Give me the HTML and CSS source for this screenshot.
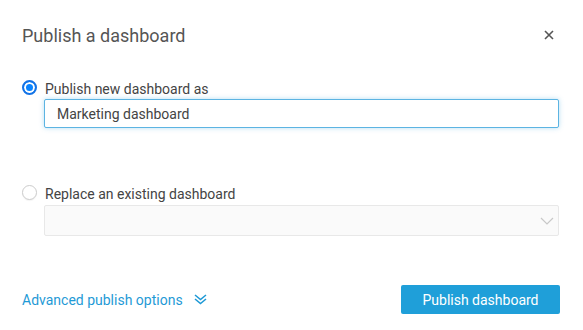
FILE: index.html
```html
<!DOCTYPE html>
<html lang="en">
<head>
    <meta charset="UTF-8">
    <meta name="viewport" content="width=device-width, initial-scale=1.0">
    <title>Publish a dashboard</title>
    <link rel="stylesheet" href="styles.css">
</head>
<body>
    <div class="dialog">
        <div class="dialog-header">
            <h1>Publish a dashboard</h1>
            <button class="close" aria-label="Close">
                <svg width="10" height="10" viewBox="0 0 10 10"><path d="M1 1L9 9M9 1L1 9" stroke="#555" stroke-width="1.6"/></svg>
            </button>
        </div>

        <div class="option">
            <label class="radio-row">
                <span class="radio checked"></span>
                <span>Publish new dashboard as</span>
            </label>
            <input type="text" class="text-input" value="Marketing dashboard">
        </div>

        <div class="option replace">
            <label class="radio-row">
                <span class="radio"></span>
                <span>Replace an existing dashboard</span>
            </label>
            <div class="select">
                <svg width="14" height="8" viewBox="0 0 14 8"><path d="M1 1L7 7L13 1" fill="none" stroke="#c8c8c8" stroke-width="1.2"/></svg>
            </div>
        </div>

        <div class="dialog-footer">
            <a href="#" class="advanced">Advanced publish options
                <svg width="13" height="11" viewBox="0 0 13 11"><path d="M1 1L6.5 5.5L12 1M1 5L6.5 9.5L12 5" fill="none" stroke="#1f9ad6" stroke-width="1.6"/></svg>
            </a>
            <button class="primary">Publish dashboard</button>
        </div>
    </div>
</body>
</html>
```

FILE: styles.css
```css
* {
    margin: 0;
    padding: 0;
    box-sizing: border-box;
}

body {
    font-family: Roboto, "Liberation Sans", sans-serif;
    background-color: #fff;
    color: #444;
}

.dialog {
    width: 583px;
    height: 330px;
    padding: 24px 22px 0 22px;
    display: flex;
    flex-direction: column;
}

.dialog-header {
    display: flex;
    justify-content: space-between;
    align-items: center;
    height: 22px;
}

h1 {
    font-size: 18px;
    font-weight: 400;
    color: #555;
}

.close {
    background: none;
    border: none;
    width: 10px;
    height: 10px;
    margin-right: 7px;
    display: flex;
}

.option {
    margin-top: 34px;
    display: flex;
    flex-direction: column;
}

.option.replace {
    margin-top: 57px;
}

.radio-row {
    display: flex;
    align-items: center;
    gap: 8px;
    font-size: 14px;
    color: #444;
    height: 18px;
}

.radio {
    width: 15px;
    height: 15px;
    margin-top: -3px;
    border-radius: 50%;
    border: 1px solid #ccc;
    background: #fff;
    box-shadow: 0 1px 1px rgba(0, 0, 0, 0.05);
}

.radio.checked {
    border: 2px solid #1473e6;
    box-shadow: inset 0 0 0 2px #fff;
    background: #0a84ff;
}

.text-input {
    margin: 1px 0 0 22px;
    height: 29px;
    width: 515px;
    border: 1px solid #5cb4e2;
    border-radius: 2px;
    box-shadow: 0 0 5px rgba(92, 180, 226, 0.45);
    padding: 0 12px;
    font-family: inherit;
    font-size: 14px;
    color: #444;
    outline: none;
}

.select {
    margin: 2px 0 0 22px;
    height: 31px;
    width: 515px;
    background: #fafafa;
    border: 1px solid #e8e8e8;
    border-radius: 2px;
    display: flex;
    justify-content: flex-end;
    align-items: center;
    padding-right: 4px;
}

.dialog-footer {
    margin-top: auto;
    margin-bottom: 16px;
    display: flex;
    justify-content: space-between;
    align-items: center;
}

.advanced {
    color: #1f9ad6;
    font-size: 14px;
    text-decoration: none;
    display: flex;
    align-items: center;
    gap: 11px;
}

.primary {
    background-color: #1f9fd9;
    color: #fff;
    border: none;
    border-radius: 2px;
    width: 159px;
    height: 29px;
    font-family: inherit;
    font-size: 14px;
    margin-right: 1px;
    cursor: pointer;
}
```
